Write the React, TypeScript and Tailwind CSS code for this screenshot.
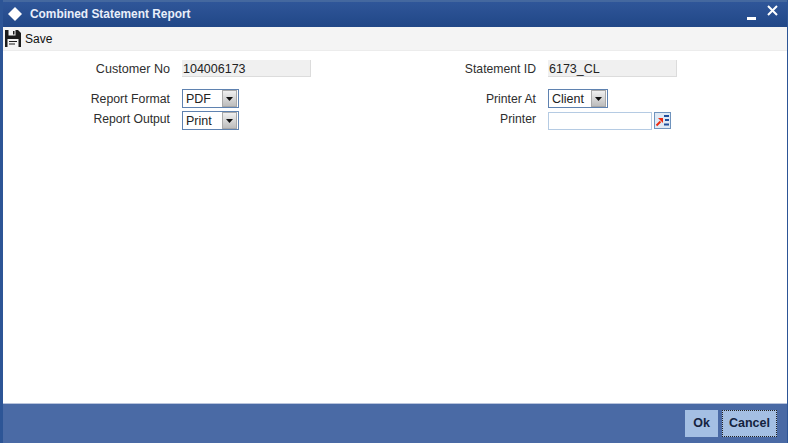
import React from "react";

const FONT = "font-['Liberation_Sans',Arial,sans-serif]";

const Arrow = () => (
  <span className="flex h-[17px] w-[15px] items-center justify-center border border-[#a8a8a8] bg-gradient-to-b from-[#f0f0f0] to-[#bdbdbd]">
    <svg width="7" height="4" viewBox="0 0 7 4">
      <path d="M0 0h7L3.5 4z" fill="#111" />
    </svg>
  </span>
);

const Label = ({ text, className = "" }: { text: string; className?: string }) => (
  <span className={`text-right leading-[17px] text-[#2e2e2e] ${className}`}>{text}</span>
);

const ReadOnly = ({ value }: { value: string }) => (
  <div className="flex h-[17px] w-[129px] items-center border-b border-r border-[#dcdcdc] bg-[#f0f0f0] pl-[1px] text-[12.5px] text-[#222]">
    <span className="translate-y-px">{value}</span>
  </div>
);

const Select = ({ value, width }: { value: string; width: string }) => (
  <div className={`flex h-[19px] items-center justify-between border border-[#5f82b0] bg-white pl-[3px] pr-[1px] text-[12.5px] text-[#222] ${width}`}>
    <span className="translate-y-px">{value}</span>
    <Arrow />
  </div>
);

const PickerIcon = () => (
  <span className="flex h-[17px] w-[17px] items-center justify-center border border-[#6f93bd] bg-[#dfe9f5]">
    <svg width="15" height="13" viewBox="0 0 15 13">
      <path d="M1.5 11.5L5.5 7.5" stroke="#ee2a10" strokeWidth="2" />
      <path d="M3 4h5v5z" fill="#ee2a10" />
      <path d="M9 2h5M10 6h4M9 10.5h5" stroke="#1f4e9c" strokeWidth="2" />
    </svg>
  </span>
);

export default function App() {
  return (
    <div className={`flex h-[443px] w-[788px] flex-col overflow-hidden border-l-[3px] border-r border-[#2d5596] bg-white ${FONT}`}>
      {/* Title bar */}
      <div className="flex h-[27px] shrink-0 items-center justify-between border-t-2 border-[#44689f] bg-gradient-to-b from-[#2f5699] to-[#214787] pl-[5px] pr-[9px]">
        <div className="flex items-center gap-[8px]">
          <svg width="14" height="14" viewBox="0 0 14 14">
            <path d="M7 0l7 7-7 7-7-7z" fill="#fff" />
          </svg>
          <span className="text-[11.9px] font-bold text-[#e8eefa]">Combined Statement Report</span>
        </div>
        <div className="flex items-start gap-[11px]">
          <span className="mt-[7px] h-[3px] w-[9px] bg-white" />
          <svg width="11" height="11" viewBox="0 0 11 11" className="-mt-[5px]">
            <path d="M1 1l9 9M10 1l-9 9" stroke="#fff" strokeWidth="2" />
          </svg>
        </div>
      </div>

      {/* Toolbar */}
      <div className="flex h-[24px] shrink-0 items-center gap-[4px] border-b border-[#ececec] bg-[#f4f4f4] pl-[2px]">
        <svg width="16" height="17" viewBox="0 0 16 17">
          <path d="M0 0h13l3 3v14H0z" fill="#1c1c1c" />
          <path d="M3.5 0h7v5.5h-7z" fill="#f4f4f4" />
          <path d="M8 1h1.5v3.5H8z" fill="#1c1c1c" />
          <path d="M2.5 9h11v8h-11z" fill="#f4f4f4" />
          <path d="M4 11h8v1H4zM4 13.5h6v1H4z" fill="#1c1c1c" />
        </svg>
        <span className="text-[12px] text-[#111]">Save</span>
      </div>

      {/* Form */}
      <div className="flex flex-1 pt-[9px]">
        <div className="flex w-[365px] flex-col">
          <div className="flex items-center gap-[12px]">
            <Label text="Customer No" className="w-[167px] translate-y-px text-[12.6px]" />
            <ReadOnly value="104006173" />
          </div>
          <div className="mt-[12px] flex items-center gap-[12px]">
            <Label text="Report Format" className="w-[167px] translate-y-px text-[12.3px]" />
            <Select value="PDF" width="w-[57px]" />
          </div>
          <div className="mt-[3px] flex items-center gap-[12px]">
            <Label text="Report Output" className="w-[167px] -translate-y-px text-[12.2px]" />
            <Select value="Print" width="w-[57px]" />
          </div>
        </div>
        <div className="flex flex-col">
          <div className="flex items-center gap-[12px]">
            <Label text="Statement ID" className="w-[168px] translate-y-px text-[12.2px]" />
            <ReadOnly value="6173_CL" />
          </div>
          <div className="mt-[12px] flex items-center gap-[12px]">
            <Label text="Printer At" className="w-[168px] translate-y-px text-[12.2px]" />
            <Select value="Client" width="w-[60px]" />
          </div>
          <div className="mt-[3px] flex h-[19px] items-center gap-[12px]">
            <Label text="Printer" className="w-[168px] -translate-y-px text-[12.2px]" />
            <div className="flex items-center gap-[2px]">
              <div className="h-[18px] w-[104px] border border-[#b5cbe3] bg-white" />
              <PickerIcon />
            </div>
          </div>
        </div>
      </div>

      {/* Footer */}
      <div className="flex h-[40px] shrink-0 items-center justify-end gap-[4px] border-t border-[#b9c4dc] bg-[#4a6aa5] pr-[10px]">
        <button className="h-[27px] w-[33px] bg-[#a4bfe3] text-[12.5px] font-bold text-[#14233f]">Ok</button>
        <button className="h-[27px] w-[55px] border border-dotted border-[#222] bg-[#a4bfe3] text-[12.5px] font-bold text-[#14233f]">Cancel</button>
      </div>
    </div>
  );
}
